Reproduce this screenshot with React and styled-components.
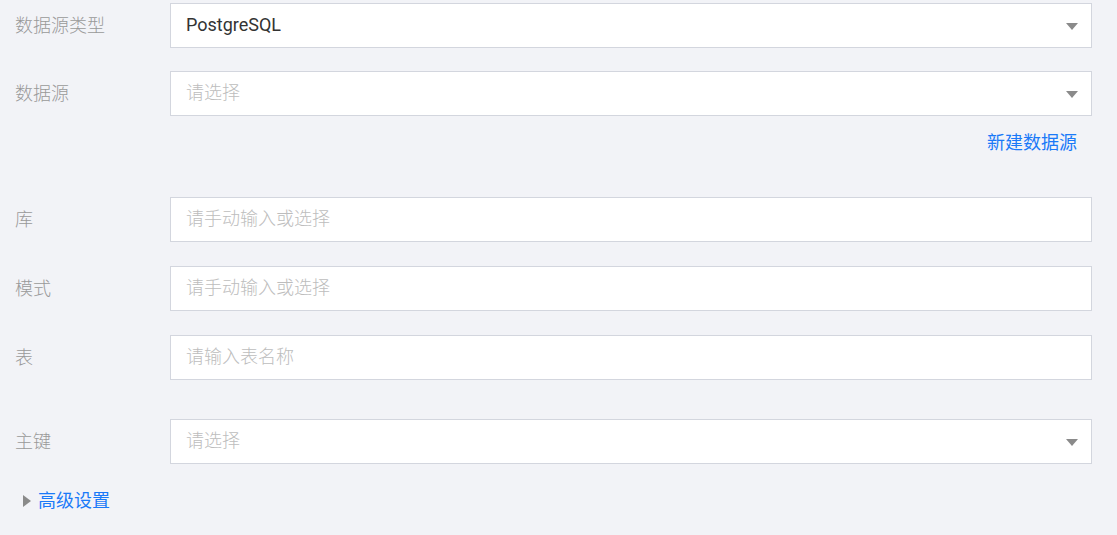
import React from 'react';
import styled, { createGlobalStyle } from 'styled-components';

const GlobalStyle = createGlobalStyle`
  html, body {
    margin: 0;
    padding: 0;
    background: #f2f3f7;
    font-family: Roboto, "Noto Sans CJK SC", sans-serif;
  }
  * { box-sizing: border-box; }
`;

const Form = styled.div`
  width: 1117px;
  height: 535px;
  padding: 3px 25px 0 15px;
  background: #f2f3f7;
  overflow: hidden;
`;

const Row = styled.div`
  display: grid;
  grid-template-columns: 155px 1fr;
  align-items: center;
  margin-bottom: ${(p) => p.$gap ?? 24}px;
`;

const Label = styled.label`
  font-size: 18px;
  font-weight: 300;
  color: #999;
  line-height: 24px;
`;

const Field = styled.div`
  position: relative;
  height: 45px;
  background: #fff;
  border: 1px solid #d3d6de;
  display: flex;
  align-items: center;
  padding: 0 15px 2px;
  font-size: 18px;
  line-height: 24px;
  font-weight: ${(p) => (p.$placeholder ? 300 : 400)};
  color: ${(p) => (p.$placeholder ? '#bdbdbd' : '#333')};
`;

const Caret = styled.span`
  position: absolute;
  right: 13px;
  top: 19px;
  width: 0;
  height: 0;
  border-left: 6px solid transparent;
  border-right: 6px solid transparent;
  border-top: 7px solid #8a8a8a;
`;

const Extra = styled.div`
  display: flex;
  justify-content: flex-end;
  padding: 17px 15px 0 0;
  margin-bottom: 44px;
`;

const Link = styled.a`
  font-size: 18px;
  line-height: 20px;
  color: #1a7af8;
  cursor: pointer;
`;

const Advanced = styled.div`
  display: flex;
  align-items: center;
  gap: 7px;
  padding-left: 8px;
  font-size: 18px;
  line-height: 24px;
  color: #1a7af8;
`;

const Arrow = styled.span`
  width: 0;
  height: 0;
  border-top: 6px solid transparent;
  border-bottom: 6px solid transparent;
  border-left: 8px solid #8a8a8a;
`;

function Item({ label, value, placeholder, select, gap }) {
  return (
    <Row $gap={gap}>
      <Label>{label}</Label>
      <Field $placeholder={!value}>
        {value || placeholder}
        {select && <Caret />}
      </Field>
    </Row>
  );
}

export default function App() {
  return (
    <>
      <GlobalStyle />
      <Form>
        <Item label="数据源类型" value="PostgreSQL" select gap={23} />
        <Item label="数据源" placeholder="请选择" select gap={0} />
        <Extra>
          <Link>新建数据源</Link>
        </Extra>
        <Item label="库" placeholder="请手动输入或选择" />
        <Item label="模式" placeholder="请手动输入或选择" />
        <Item label="表" placeholder="请输入表名称" gap={39} />
        <Item label="主键" placeholder="请选择" select gap={25} />
        <Advanced>
          <Arrow />
          高级设置
        </Advanced>
      </Form>
    </>
  );
}
